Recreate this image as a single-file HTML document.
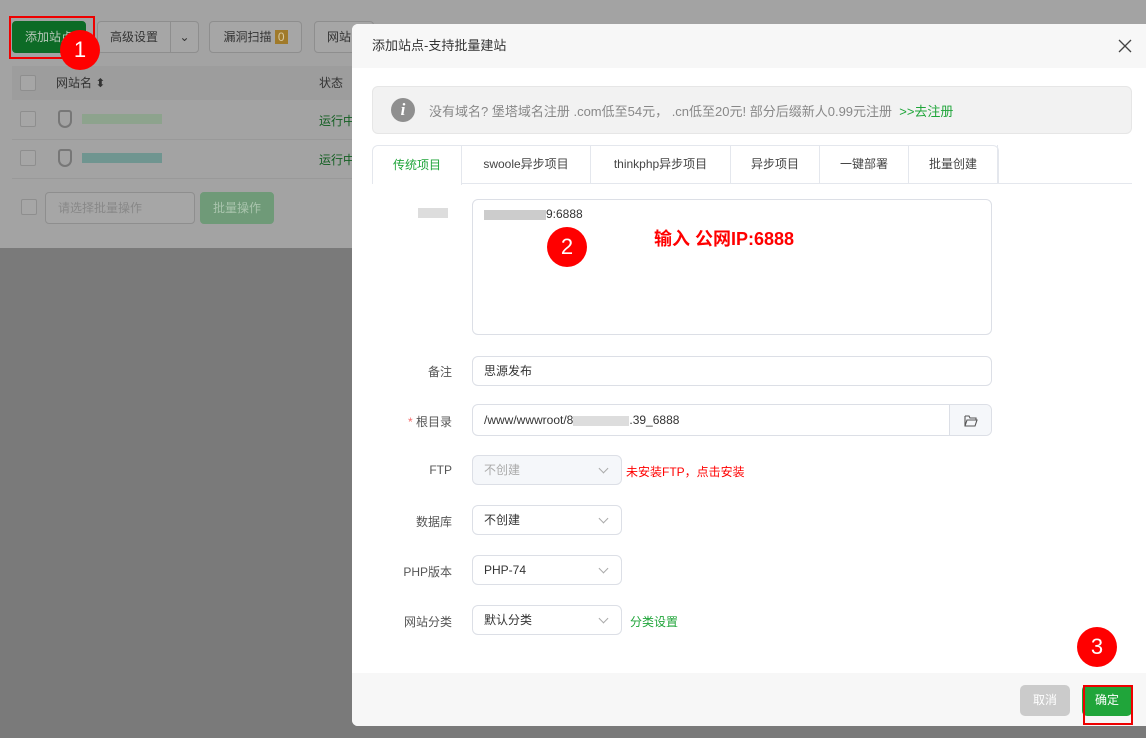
<!DOCTYPE html>
<html><head><meta charset="utf-8"><style>
*{box-sizing:border-box;margin:0;padding:0}
body{width:1146px;height:738px;overflow:hidden;background:#7a7a7a;font-family:"Liberation Sans","Noto Sans CJK SC",sans-serif;font-size:12px;color:#333;position:relative}
.abs{position:absolute}
.top{left:0;top:0;width:1146px;height:248px;background:#a3a3a3}
.btn{position:absolute;border:1px solid #8e8e8e;border-radius:4px;height:32px;line-height:30px;text-align:center;color:#333;font-size:12px;background:#a6a6a6}
.cb{position:absolute;width:16px;height:16px;border:1px solid #8e8e8e;border-radius:2px;background:#a6a6a6}
.modal{left:352px;top:24px;width:794px;height:702px;background:#fff;border-radius:6px 0 0 6px;overflow:hidden}
.hdr{height:44px;background:#f7f7f7;line-height:44px;padding-left:20px;font-size:13px;color:#333}
.inp{position:absolute;border:1px solid #dcdfe6;border-radius:6px;background:#fff;font-size:12px;color:#333;padding-left:11px}
.lbl{position:absolute;width:100px;text-align:right;font-size:12px;color:#555}
.sel{position:absolute;width:150px;height:30px;border:1px solid #dcdfe6;border-radius:6px;line-height:28px;padding-left:11px;font-size:12px;color:#333}
.sel:after{content:"";position:absolute;right:14px;top:9px;width:6px;height:6px;border-right:1px solid #aaa;border-bottom:1px solid #aaa;transform:rotate(45deg)}
.tab{position:absolute;top:0;height:38px;line-height:38px;text-align:center;border-right:1px solid #e4e7ed;font-size:12px;color:#444}
.circ{position:absolute;border-radius:50%;background:#f00;color:#fff;text-align:center;font-size:22px}
</style></head><body>
<div class="abs top"></div>
<div class="btn" style="left:12px;top:21px;width:74px;background:#0d6b26;border-color:#0d6b26;color:#b7c8b9">添加站点</div>
<div class="abs" style="left:9px;top:16px;width:86px;height:43px;border:2px solid #e00"></div>
<div class="btn" style="left:97px;top:21px;width:102px;text-align:left;padding-left:12px">高级设置<span style="position:absolute;left:72px;top:0;height:30px;border-left:1px solid #8e8e8e;width:28px;text-align:center">⌄</span></div>
<div class="btn" style="left:209px;top:21px;width:93px">漏洞扫描 <span style="background:#a07a2a;color:#d8c8a0;padding:0 3px">0</span></div>
<div class="btn" style="left:314px;top:21px;width:60px;text-align:left;padding-left:12px">网站</div>
<div class="abs" style="left:12px;top:66px;width:340px;height:34px;background:#9d9d9d"></div>
<div class="cb" style="left:20px;top:75px"></div>
<div class="abs" style="left:56px;top:74px;color:#333">网站名 ⬍</div>
<div class="abs" style="left:319px;top:74px;color:#333">状态</div>
<div class="abs" style="left:12px;top:139px;width:340px;border-top:1px solid #999"></div>
<div class="abs" style="left:12px;top:178px;width:340px;border-top:1px solid #999"></div>
<div class="cb" style="left:20px;top:111px"></div>
<div class="cb" style="left:20px;top:150px"></div>
<div class="abs" style="left:58px;top:110px;width:14px;height:18px;border:2px solid #777;border-radius:3px 3px 7px 7px"></div>
<div class="abs" style="left:58px;top:149px;width:14px;height:18px;border:2px solid #777;border-radius:3px 3px 7px 7px"></div>
<div class="abs" style="left:82px;top:114px;width:80px;height:10px;background:#8da38d"></div>
<div class="abs" style="left:82px;top:153px;width:80px;height:10px;background:#6f9590"></div>
<div class="abs" style="left:319px;top:112px;color:#135f22">运行中</div>
<div class="abs" style="left:319px;top:151px;color:#135f22">运行中</div>
<div class="cb" style="left:21px;top:199px"></div>
<div class="btn" style="left:45px;top:192px;width:150px;text-align:left;padding-left:12px;color:#888">请选择批量操作</div>
<div class="btn" style="left:200px;top:192px;width:74px;background:#6f9a78;border-color:#6f9a78;color:#a9c4ad">批量操作</div>
<div class="circ" style="left:60px;top:30px;width:40px;height:40px;line-height:40px">1</div>

<div class="abs modal">
<div class="hdr">添加站点-支持批量建站<svg class="abs" style="right:14px;top:15px" width="14" height="14" viewBox="0 0 14 14"><path d="M1 1L13 13M13 1L1 13" stroke="#444" stroke-width="1.3"/></svg></div>
<div class="abs" style="left:20px;top:62px;width:760px;height:48px;background:#f2f2f2;border:1px solid #e6e6e6;border-radius:6px">
<div class="abs" style="left:18px;top:11px;width:24px;height:24px;border-radius:50%;background:#8f8f8f;color:#fff;text-align:center;line-height:24px;font-style:italic;font-weight:bold;font-family:'Liberation Serif',serif;font-size:17px">i</div>
<div class="abs" style="left:56px;top:14px;font-size:13px;color:#888;white-space:nowrap">没有域名? 堡塔域名注册 .com低至54元，&nbsp;.cn低至20元! 部分后缀新人0.99元注册 &nbsp;<span style="color:#20a53a">&gt;&gt;去注册</span></div>
</div>
<div class="abs" style="left:20px;top:121px;width:760px;height:39px;border-bottom:1px solid #e4e7ed">
<div class="abs" style="left:0;top:0;width:627px;height:39px;border:1px solid #e4e7ed;border-bottom:none;border-radius:6px 6px 0 0"></div>
<div class="tab" style="left:1px;top:1px;width:89px;color:#20a53a;background:#fff;height:39px;border-radius:6px 0 0 0">传统项目</div>
<div class="tab" style="left:90px;width:129px">swoole异步项目</div>
<div class="tab" style="left:219px;width:140px">thinkphp异步项目</div>
<div class="tab" style="left:359px;width:89px">异步项目</div>
<div class="tab" style="left:448px;width:89px">一键部署</div>
<div class="tab" style="left:537px;width:89px">批量创建</div>
</div>
<div class="abs" style="left:66px;top:184px;width:30px;height:10px;background:#ddd"></div>
<div class="inp" style="left:120px;top:175px;width:520px;height:136px;padding-top:7px"><span style="display:inline-block;width:62px;height:10px;background:#ccc;vertical-align:middle"></span>9:6888</div>
<div class="abs" style="left:302px;top:201px;font-size:18px;font-weight:bold;color:#f00">输入 公网IP:6888</div>
<div class="circ" style="left:195px;top:203px;width:40px;height:40px;line-height:40px">2</div>
<div class="lbl" style="left:0;top:339px">备注</div>
<div class="inp" style="left:120px;top:332px;width:520px;height:30px;line-height:28px">思源发布</div>
<div class="lbl" style="left:0;top:389px"><span style="color:#f56c6c">*</span> 根目录</div>
<div class="inp" style="left:120px;top:380px;width:520px;height:32px;line-height:30px">/www/wwwroot/8<span style="display:inline-block;width:56px;height:10px;background:#ddd;vertical-align:middle"></span>.39_6888
<div class="abs" style="right:0;top:0;width:42px;height:30px;border-left:1px solid #dcdfe6;background:#f5f7fa;border-radius:0 6px 6px 0;text-align:center;line-height:30px"><svg width="14" height="12" viewBox="0 0 14 12" style="vertical-align:middle"><path d="M1 1h4l1 2h6v2M1 1v10h10l2-6H3L1 11" fill="none" stroke="#555" stroke-width="1.1"/></svg></div></div>
<div class="lbl" style="left:0;top:439px">FTP</div>
<div class="sel" style="left:120px;top:431px;background:#f5f7fa;color:#aaa">不创建</div>
<div class="abs" style="left:274px;top:439px;color:#f00">未安装FTP，点击安装</div>
<div class="lbl" style="left:0;top:489px">数据库</div>
<div class="sel" style="left:120px;top:481px">不创建</div>
<div class="lbl" style="left:0;top:539px">PHP版本</div>
<div class="sel" style="left:120px;top:531px">PHP-74</div>
<div class="lbl" style="left:0;top:589px">网站分类</div>
<div class="sel" style="left:120px;top:581px">默认分类</div>
<div class="abs" style="left:278px;top:589px;color:#20a53a">分类设置</div>
<div class="abs" style="left:0;top:649px;width:794px;height:53px;background:#f7f7f7"></div>
<div class="abs" style="left:668px;top:661px;width:50px;height:31px;background:#cbcbcb;border-radius:5px;color:#fff;text-align:center;line-height:31px">取消</div>
<div class="abs" style="left:730px;top:661px;width:50px;height:31px;background:#20a53a;border-radius:5px;color:#fff;text-align:center;line-height:31px">确定</div>
<div class="abs" style="left:731px;top:661px;width:50px;height:40px;border:2px solid #e00"></div>
<div class="circ" style="left:725px;top:603px;width:40px;height:40px;line-height:40px">3</div>
</div>
</body></html>
